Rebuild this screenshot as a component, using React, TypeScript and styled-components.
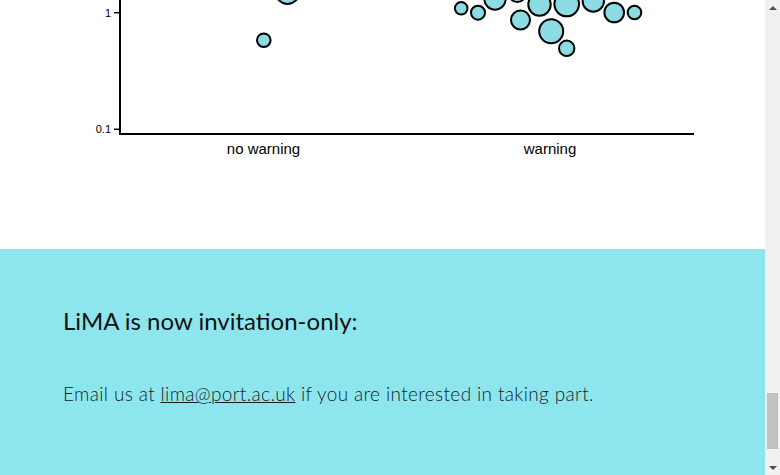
import React from "react";
import styled, { createGlobalStyle } from "styled-components";

const GlobalStyle = createGlobalStyle`
  html, body { margin: 0; padding: 0; background: #ffffff; overflow: hidden; }
  body { font-family: "Lato", "Open Sans", sans-serif; }
`;

const Frame = styled.div`
  display: flex;
  width: 780px;
  height: 475px;
  overflow: hidden;
`;

const Main = styled.main`
  flex: 1;
  display: flex;
  flex-direction: column;
  min-width: 0;
`;

const ChartSection = styled.section`
  background: #ffffff;
  height: 249px;
  flex-shrink: 0;
`;

const ChartSvg = styled.svg`
  display: block;
  width: 765px;
  height: 249px;
`;

const Invite = styled.section`
  flex: 1;
  background: #8de6ee;
  box-sizing: border-box;
  padding: 56px 63px 0;
  display: flex;
  flex-direction: column;
  gap: 43px;
`;

const Heading = styled.h2`
  margin: 0;
  font-family: "Lato", sans-serif;
  font-weight: 400;
  font-size: 24px;
  line-height: 32px;
  color: #111;
`;

const Body = styled.p`
  margin: 0;
  font-family: "Lato", sans-serif;
  font-weight: 300;
  font-size: 19px;
  letter-spacing: 0.36px;
  line-height: 28px;
  color: #151d1e;
`;

const Mail = styled.a`
  color: inherit;
  text-decoration: underline;
`;

const Scrollbar = styled.div`
  width: 15px;
  flex-shrink: 0;
  background: #f1f1f1;
  display: flex;
  flex-direction: column;
  align-items: center;
`;

const ArrowButton = styled.div`
  width: 15px;
  height: 15px;
  display: flex;
  align-items: center;
  justify-content: center;
`;

const Arrow = styled.div<{ $down?: boolean }>`
  width: 0;
  height: 0;
  border-left: 4px solid transparent;
  border-right: 4px solid transparent;
  ${(p) => (p.$down ? "border-top: 4px solid #505050;" : "border-bottom: 4px solid #505050;")}
`;

const Track = styled.div`
  flex: 1;
  width: 15px;
  display: flex;
  flex-direction: column;
  align-items: center;
`;

const Thumb = styled.div`
  margin-top: auto;
  margin-bottom: 11px;
  width: 11px;
  height: 56px;
  background: #c1c1c1;
`;

const FILL = "#8ddce4";

type Dot = { x: number; y: number; r: number };

// chart coordinates: visible window is y 151..400
const dots: Dot[] = [
  { x: 287.5, y: 143.5, r: 11.5 },
  { x: 263.8, y: 191.2, r: 6.8 },
  { x: 461.2, y: 159.3, r: 6.3 },
  { x: 478, y: 163.7, r: 7 },
  { x: 495, y: 150, r: 10.7 },
  { x: 517.3, y: 144, r: 9 },
  { x: 520.5, y: 171, r: 9.5 },
  { x: 539.5, y: 155.5, r: 11.2 },
  { x: 566.7, y: 155, r: 12.3 },
  { x: 593.3, y: 152, r: 10.7 },
  { x: 614.2, y: 163.5, r: 9.8 },
  { x: 634.5, y: 163.5, r: 6.8 },
  { x: 551.2, y: 182.3, r: 12 },
  { x: 566.7, y: 199.3, r: 7.7 },
];

const ticks = [
  { label: "1", y: 163.7 },
  { label: "0.1", y: 280.3 },
];

function Chart() {
  return (
    <ChartSvg viewBox="0 151 765 249" xmlns="http://www.w3.org/2000/svg">
      <g fontFamily="'Liberation Sans', Arial, sans-serif" fill="#000">
        {ticks.map((t) => (
          <g key={t.label}>
            <line x1={114} x2={120} y1={t.y} y2={t.y} stroke="#000" strokeWidth={1.5} />
            <text x={111} y={t.y + 4} fontSize={11} textAnchor="end">
              {t.label}
            </text>
          </g>
        ))}
        <line x1={120} x2={120} y1={100} y2={286} stroke="#000" strokeWidth={2} />
        <line x1={119} x2={694} y1={285} y2={285} stroke="#000" strokeWidth={2} />
        <line x1={407} x2={407} y1={284} y2={286} stroke="#000" strokeWidth={1} />
        <text x={263.5} y={305} fontSize={15} textAnchor="middle">
          no warning
        </text>
        <text x={550} y={305} fontSize={15} textAnchor="middle">
          warning
        </text>
      </g>
      {dots.map((d, i) => (
        <circle key={i} cx={d.x} cy={d.y} r={d.r} fill={FILL} stroke="#000" strokeWidth={2} />
      ))}
    </ChartSvg>
  );
}

export default function App() {
  return (
    <Frame>
      <GlobalStyle />
      <Main>
        <ChartSection>
          <Chart />
        </ChartSection>
        <Invite>
          <Heading>LiMA is now invitation-only:</Heading>
          <Body>
            Email us at <Mail href="mailto:lima@port.ac.uk">lima@port.ac.uk</Mail> if you are
            interested in taking part.
          </Body>
        </Invite>
      </Main>
      <Scrollbar>
        <ArrowButton>
          <Arrow />
        </ArrowButton>
        <Track>
          <Thumb />
        </Track>
        <ArrowButton>
          <Arrow $down />
        </ArrowButton>
      </Scrollbar>
    </Frame>
  );
}
